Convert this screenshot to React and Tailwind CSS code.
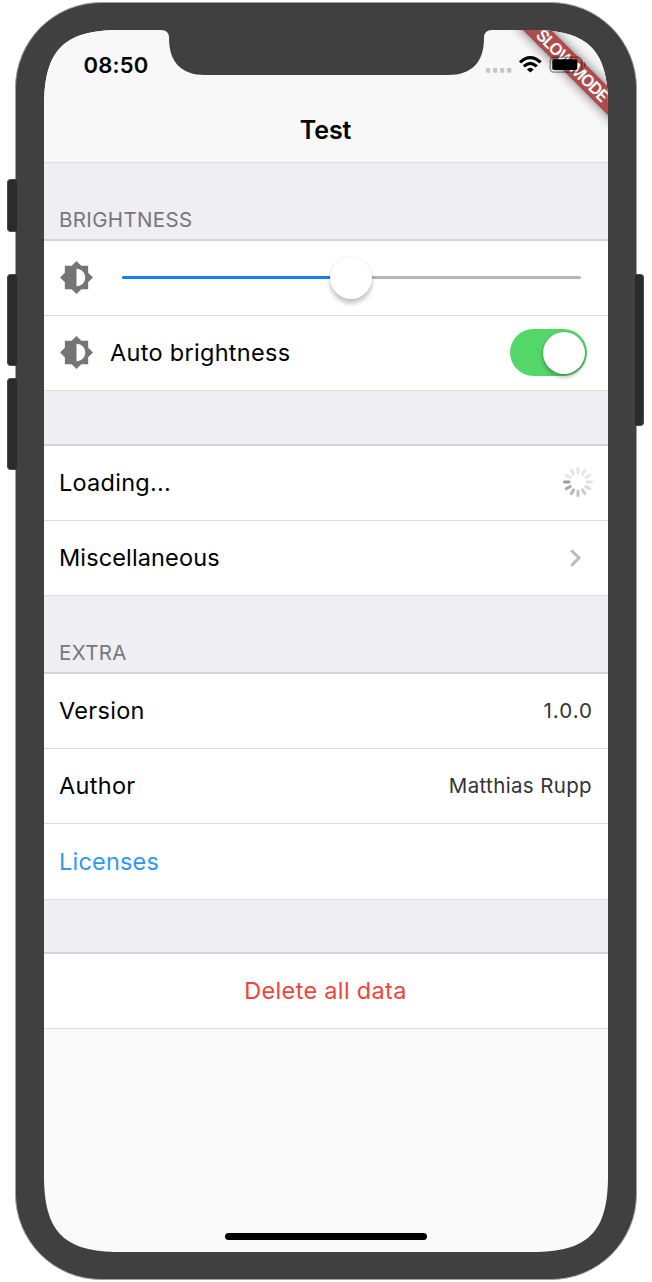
import React from "react";

function Brightness() {
  return (
    <svg className="size-[35px] shrink-0 fill-[#757575]" viewBox="0 0 24 24">
      <path d="M20 15.31L23.31 12 20 8.69V4h-4.69L12 .69 8.69 4H4v4.69L.69 12 4 15.31V20h4.69L12 23.31 15.31 20H20v-4.69zM12 18V6c3.31 0 6 2.69 6 6s-2.69 6-6 6z" />
    </svg>
  );
}

function Slider() {
  return (
    <div className="relative ml-[28px] flex h-[3.5px] w-[459px] rounded-full bg-[#b5b5b5]">
      <div className="h-full w-1/2 rounded-full bg-[#147efb]" />
      <div className="absolute top-1/2 left-1/2 -ml-[0.5px] size-[42px] -translate-1/2 rounded-full bg-white shadow-[0_0_0_1px_rgba(0,0,0,0.04),0_4.5px_4px_rgba(0,0,0,0.22)]" />
    </div>
  );
}

function Toggle() {
  return (
    <div className="mr-[6px] flex h-[47px] w-[77px] items-center justify-end rounded-full bg-[#53d769] pr-[2px]">
      <div className="size-[42px] rounded-full bg-white shadow-[0_3px_4px_rgba(0,0,0,0.28),0_0_2px_rgba(0,0,0,0.2)]" />
    </div>
  );
}

const spokes = [
  "#e5e5e9", "#e5e5e9", "#e5e5e9", "#e2e2e6", "#d9d9db", "#cccccd",
  "#c2c2c2", "#b8b8b8", "#aaaaaa", "#9b9b9b", "#e5e5e9", "#e5e5e9",
];

function Spinner() {
  return (
    <svg className="size-[30px]" viewBox="-15 -15 30 30">
      {spokes.map((color, i) => (
        <rect key={i} x="-1.5" y="-15" width="3" height="7.5" rx="1.5" fill={color} transform={`rotate(${i * 30})`} />
      ))}
    </svg>
  );
}

function Row({ children, className = "tracking-[0.3px]" }) {
  return (
    <div className={`flex h-[75.2px] shrink-0 items-center border-b-[1.5px] border-[#dedee0] bg-white px-[15px] text-[23.5px] ${className}`}>
      {children}
    </div>
  );
}

function SectionHeader({ title, className = "pb-[6px]" }) {
  return (
    <div className={`flex h-[78px] shrink-0 items-end border-b-2 border-[#d4d4d9] bg-[#efeef3] px-[15px] text-[20.5px] leading-[26px] tracking-[0.35px] text-[#77777a] ${className}`}>
      {title}
    </div>
  );
}

function Gap() {
  return <div className="h-[54.2px] shrink-0 border-b-2 border-[#d4d4d9] bg-[#efeef3]" />;
}

function StatusIcons() {
  return (
    <svg className="absolute top-[20px] left-[440px] h-[30px] w-[110px]" viewBox="484 50 110 30">
      <g fill="#c6c6c6">
        <rect x="486" y="68" width="4.3" height="4.7" rx="1" />
        <rect x="493" y="68" width="4.3" height="4.7" rx="1" />
        <rect x="500" y="68" width="4.3" height="4.7" rx="1" />
        <rect x="507" y="68" width="4.3" height="4.7" rx="1" />
      </g>
      <g fill="none" stroke="#000" strokeWidth="3.1">
        <path d="M520 62.4Q530.3 52.8 540.6 62.4" />
        <path d="M523.8 66.4Q530.3 60.2 536.8 66.4" />
      </g>
      <path d="M526.9 69.4Q530.3 66.3 533.7 69.4L530.3 72.6Z" />
      <rect x="550.2" y="57.2" width="31.6" height="15" rx="4" fill="none" stroke="#000" strokeOpacity=".45" strokeWidth="1.3" />
      <rect x="552.3" y="59.2" width="25" height="10.8" rx="1.8" />
      <path d="M584 61.8q3 2.6 0 5.4z" fillOpacity=".5" />
    </svg>
  );
}

function StatusBar() {
  return (
    <div className="relative flex h-[133px] shrink-0 flex-col border-b-[1.5px] border-[#dddde0] bg-[#f8f8f8]">
      <div className="pt-[22px] pl-[39.5px] text-[22px] leading-[27px] font-semibold tracking-[0.2px]">08:50</div>
      <div className="mt-[35px] pr-px text-center text-[25px] leading-[32px] font-semibold tracking-[-0.1px]">Test</div>
      <div className="absolute top-[35.5px] left-[528.5px] flex h-[20px] w-[150px] -translate-1/2 rotate-45 items-center justify-center bg-[#ae4c4d] pr-[2px] text-[16.5px] font-semibold tracking-[-1px] whitespace-nowrap text-white shadow-[0_0_12px_rgba(0,0,0,0.55)]">
        SLOW MODE
      </div>
      <StatusIcons />
    </div>
  );
}

function Screen() {
  return (
    <div className="flex h-[1222px] w-[564px] flex-col bg-[#fafafa] text-black [clip-path:path('M0,76C0,20_20,0_76,0H488C544,0_564,20_564,76V1146C564,1202_544,1222_488,1222H76C20,1222_0,1202_0,1146Z')]">
      <StatusBar />
      <SectionHeader title="BRIGHTNESS" />
      <Row className="pb-px">
        <Brightness />
        <Slider />
      </Row>
      <Row className="justify-between pb-px tracking-[0.3px]">
        <div className="flex items-center gap-[16px]">
          <Brightness />
          <span>Auto brightness</span>
        </div>
        <Toggle />
      </Row>
      <Gap />
      <Row className="justify-between pb-px tracking-[0.25px]">
        Loading...
        <Spinner />
      </Row>
      <Row className="justify-between tracking-[0.13px]">
        Miscellaneous
        <svg className="mr-[11px] h-[18px] w-[12px]" viewBox="0 0 12 18" fill="none" stroke="#bcbcbc" strokeWidth="3">
          <path d="M1.2 1.3L9 9l-7.8 7.7" />
        </svg>
      </Row>
      <SectionHeader title="EXTRA" className="pb-[5.5px]" />
      <Row className="justify-between pb-px tracking-[0.3px]">
        Version
        <span className="mt-[2px] text-[20.5px] tracking-[1px] text-[#333]">1.0.0</span>
      </Row>
      <Row className="justify-between pb-px tracking-[0.3px]">
        Author
        <span className="mt-[2px] mr-px text-[20.5px] tracking-[0.36px] text-[#333]">Matthias Rupp</span>
      </Row>
      <Row className="tracking-[0.2px] text-[#2f98ef]">Licenses</Row>
      <Gap />
      <Row className="justify-center pr-[16px] pb-px tracking-[0.32px] text-[#f44336]">Delete all data</Row>
      <div className="mt-auto mb-[12px] h-[7px] w-[202px] self-center rounded-full bg-black" />
    </div>
  );
}

export default function App() {
  return (
    <div className="relative h-[1282px] w-[652px] overflow-hidden bg-white pt-[2px] pl-[15px] font-['Inter','Liberation_Sans',sans-serif]">
      <div className="relative h-[1278px] w-[622px] rounded-[86px] border border-[#a0a0a0] bg-[#404040] pt-[27px] pl-[28px]">
        <Screen />
        <svg className="absolute top-[25px] left-[143px] h-[48px] w-[334px]" viewBox="159 28 334 48" fill="#404040">
          <path d="M159 28V30H161Q169 30 169 38C169 62 181 75 205 75H448C472 75 484 62 484 38Q484 30 492 30H493V28Z" />
        </svg>
      </div>
      <div className="absolute top-[179px] left-[7px] h-[53px] w-[10px] rounded-l-[4px] border border-r-0 border-[#4a4a4a] bg-[#2b2b2b]" />
      <div className="absolute top-[274px] left-[7px] h-[92px] w-[10px] rounded-l-[4px] border border-r-0 border-[#4a4a4a] bg-[#2b2b2b]" />
      <div className="absolute top-[378px] left-[7px] h-[92px] w-[10px] rounded-l-[4px] border border-r-0 border-[#4a4a4a] bg-[#2b2b2b]" />
      <div className="absolute top-[274px] left-[635px] h-[152px] w-[9px] rounded-r-[4px] border border-l-0 border-[#4a4a4a] bg-[#2b2b2b]" />
    </div>
  );
}
